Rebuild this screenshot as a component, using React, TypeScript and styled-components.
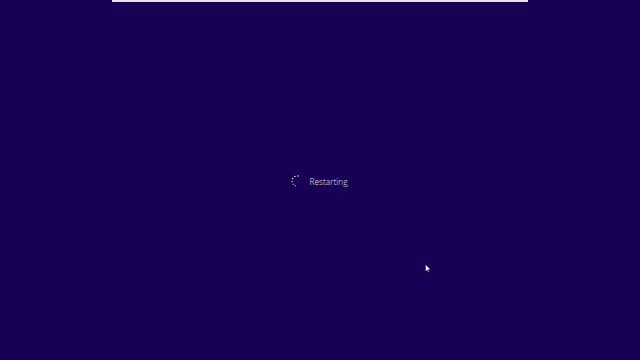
import React from "react";
import styled, { createGlobalStyle } from "styled-components";

const GlobalStyle = createGlobalStyle`
  html, body {
    margin: 0;
    padding: 0;
    background: #180054;
  }
`;

const Screen = styled.div`
  position: relative;
  width: 640px;
  height: 360px;
  background: #180054;
  overflow: hidden;
  display: flex;
  flex-direction: column;
`;

const TopStrip = styled.div`
  height: 1.5px;
  margin: 0 112px;
  background: #e8e4f0;
`;

const Center = styled.div`
  flex: 1;
  display: flex;
  align-items: center;
  justify-content: center;
  padding-top: 1px;
`;

const Status = styled.div`
  display: flex;
  align-items: center;
  gap: 6px;
  margin-left: -3px;
`;

const Label = styled.span`
  font-family: "Open Sans", "Noto Sans", sans-serif;
  font-weight: 300;
  font-size: 8.4px;
  color: #e6e2ee;
`;

const Cursor = styled.svg`
  position: absolute;
  left: 425px;
  top: 264px;
`;

// dots on the left side of the ring, like the boot spinner mid-turn
const dots = [-80, -115, -150, -185, -220, -250];

const Spinner = () => (
  <svg width="14" height="14" viewBox="0 0 14 14">
    {dots.map((a, i) => {
      const r = (a * Math.PI) / 180;
      return (
        <circle
          key={i}
          cx={7 + 5 * Math.cos(r)}
          cy={7 + 5 * Math.sin(r)}
          r={0.75}
          fill="#ffffff"
          opacity={1 - i * 0.08}
        />
      );
    })}
  </svg>
);

export default function App() {
  return (
    <Screen>
      <GlobalStyle />
      <TopStrip />
      <Center>
        <Status>
          <Spinner />
          <Label>Restarting</Label>
        </Status>
      </Center>
      <Cursor width="6" height="9" viewBox="0 0 6 9">
        <path d="M0.5 0.5 L0.5 7.5 L2.2 6 L3.4 8.5 L4.3 8.1 L3.2 5.7 L5.5 5.6 Z" fill="#ffffff" stroke="#000" strokeWidth="0.4" />
      </Cursor>
    </Screen>
  );
}
